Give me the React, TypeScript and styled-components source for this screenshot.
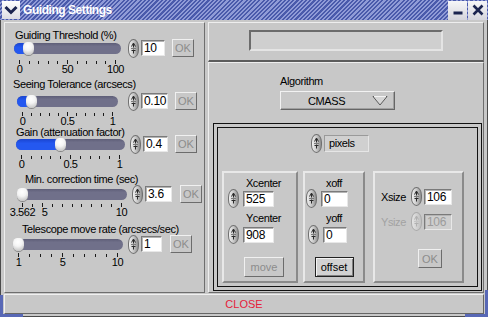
import React from "react";
import styled, { createGlobalStyle } from "styled-components";

const BG = "#c8c8c8";
const LIGHT = "#eeeeee";
const DARK = "#6e6e6e";

const GlobalStyle = createGlobalStyle`
  html, body { margin: 0; padding: 0; }
  body {
    background: ${BG};
    font-family: "Liberation Sans", Arial, Helvetica, sans-serif;
    font-size: 11px;
    letter-spacing: -0.4px;
    color: #000;
  }
  * { box-sizing: border-box; }
`;

const Window = styled.div`
  position: relative;
  width: 488px;
  height: 317px;
  background: ${BG};
  display: flex;
  flex-direction: column;
  overflow: hidden;
`;

const TitleBar = styled.div`
  height: 20px;
  flex: none;
  display: flex;
  align-items: center;
  padding: 0 1px 0 2px;
  background: repeating-linear-gradient(
    135deg,
    #4a5aab 0px,
    #4a5aab 1.5px,
    #909bd7 1.5px,
    #909bd7 3px
  );
`;

const MenuBox = styled.div`
  width: 18px;
  height: 18px;
  background: linear-gradient(#ffffff, #dcdce4);
  display: flex;
  align-items: center;
  justify-content: center;
`;

const TitleText = styled.div`
  margin-left: 3px;
  flex: 1;
  color: #fff;
  font-weight: bold;
  font-size: 12px;
  letter-spacing: -0.45px;
`;

const WinButton = styled.div`
  width: 19px;
  height: 19px;
  margin-left: 1px;
  background: linear-gradient(#f6f6f8, #d4d4dc);
  display: flex;
  align-items: center;
  justify-content: center;
`;

const Frame = styled.div`
  flex: 1;
  display: flex;
  flex-direction: column;
  gap: 1px;
  padding: 2px 3px;
  border: 1px solid #4a4a4a;
  border-top: none;
`;

const Main = styled.div`
  height: 271px;
  flex: none;
  display: flex;
  gap: 3px;
`;

const Raised = styled.div`
  background: ${BG};
  border: 1px solid;
  border-color: ${LIGHT} ${DARK} ${DARK} ${LIGHT};
`;

const LeftPanel = styled(Raised)`
  width: 201px;
  display: flex;
  flex-direction: column;
`;

const SliderBlock = styled.div`
  display: flex;
  flex-direction: column;
`;

const SliderLabel = styled.div<{ $ml: number; $mt: number }>`
  height: 12px;
  line-height: 12px;
  white-space: nowrap;
  margin-left: ${(p) => p.$ml}px;
  margin-top: ${(p) => p.$mt}px;
`;

const Controls = styled.div<{ $mt: number }>`
  height: 18px;
  display: flex;
  align-items: center;
  margin-top: ${(p) => p.$mt}px;
`;

const Track = styled.div<{ $ml: number; $w: number }>`
  position: relative;
  flex: none;
  margin-left: ${(p) => p.$ml}px;
  width: ${(p) => p.$w}px;
  height: 11px;
  border-radius: 6px;
  background: linear-gradient(#5e5e78, #70708a 30%, #70708a);
`;

const Fill = styled.div`
  position: absolute;
  left: 0;
  top: 0;
  bottom: 0;
  border-radius: 6px 0 0 6px;
  background: linear-gradient(#1a44d0, #2458f0 40%, #2458f0);
`;

const Knob = styled.div`
  position: absolute;
  top: -1px;
  width: 11px;
  height: 13px;
  border-radius: 5px 5px 6px 6px;
  background: radial-gradient(circle at 45% 30%, #ffffff 0%, #f4f4f4 40%, #b4b4b4 100%);
  box-shadow: 0 1px 0 #8a8a8a;
`;

const SpinShell = styled.div<{ $ml?: number; $disabled?: boolean }>`
  flex: none;
  width: 11px;
  height: 19px;
  margin-left: ${(p) => p.$ml ?? 0}px;
  border-radius: 6px / 9px;
  border: 1px solid ${(p) => (p.$disabled ? "#aaaaaa" : "#707070")};
  background: ${(p) =>
    p.$disabled
      ? "linear-gradient(90deg, #e4e4e4, #c0c0c0)"
      : "linear-gradient(90deg, #f2f2f2 0%, #c4c4c4 55%, #8e8e8e 100%)"};
  display: flex;
  align-items: center;
  justify-content: center;
`;

const ValueBox = styled.div<{ $w: number; $ml?: number; $disabled?: boolean }>`
  flex: none;
  width: ${(p) => p.$w}px;
  height: 16px;
  margin-left: ${(p) => p.$ml ?? 2}px;
  background: ${(p) => (p.$disabled ? "#cecece" : "#ffffff")};
  border: 1px solid;
  border-color: #7a7a7a #e8e8e8 #e8e8e8 #7a7a7a;
  box-shadow: inset 1px 1px 0 #b4b4b4;
  font-size: 12px;
  letter-spacing: -0.3px;
  line-height: 14px;
  padding-left: 2px;
  color: ${(p) => (p.$disabled ? "#9c9c9c" : "#000")};
`;

const PushButton = styled.div<{ $w: number; $h: number; $ml?: number; $active?: boolean }>`
  flex: none;
  width: ${(p) => p.$w}px;
  height: ${(p) => p.$h}px;
  margin-left: ${(p) => p.$ml ?? 0}px;
  display: flex;
  align-items: center;
  justify-content: center;
  letter-spacing: 0;
  background: ${(p) => (p.$active ? "#d2d2d2" : BG)};
  border: 1px solid;
  border-color: ${(p) =>
    p.$active ? "#222 #222 #222 #222" : "#f0f0f0 #6c6c6c #6c6c6c #f0f0f0"};
  box-shadow: ${(p) => (p.$active ? "inset 1px 1px 0 #f4f4f4, inset -1px -1px 0 #808080" : "none")};
  color: ${(p) => (p.$active ? "#000" : "#8c8c8c")};
`;

const Scale = styled.div<{ $ml: number; $w: number; $mt: number }>`
  position: relative;
  height: 14px;
  margin-left: ${(p) => p.$ml}px;
  margin-top: ${(p) => p.$mt}px;
  width: ${(p) => p.$w}px;
`;

const TickSvg = styled.svg`
  display: block;
`;

const ScaleLabel = styled.span`
  position: absolute;
  top: 5px;
  line-height: 9px;
  transform: translateX(-50%);
  white-space: nowrap;
`;

const RightCol = styled.div`
  width: 276px;
  display: flex;
  flex-direction: column;
`;

const TopPanel = styled(Raised)`
  height: 40px;
  flex: none;
  border-bottom: 2px solid #5c5c5c;
  padding-top: 7px;
  display: flex;
  justify-content: center;
`;

const StatusField = styled.div`
  width: 194px;
  height: 21px;
  background: #cfcfcf;
  border: 2px solid;
  border-color: #6c6c6c #e4e4e4 #e4e4e4 #6c6c6c;
`;

const LowerPanel = styled(Raised)`
  flex: 1;
  display: flex;
  flex-direction: column;
`;

const AlgoLabel = styled.div`
  margin: 12px 0 0 71px;
  height: 13px;
  line-height: 13px;
`;

const Dropdown = styled.div`
  margin: 3px 0 0 71px;
  width: 115px;
  height: 19px;
  display: flex;
  align-items: center;
  padding: 0 6px 0 27px;
  background: ${BG};
  border: 1px solid;
  border-color: #f2f2f2 #666 #666 #f2f2f2;
  box-shadow: inset -1px -1px 0 #a0a0a0;
`;

const DropText = styled.span`
  flex: 1;
`;

const DoubleBox = styled.div`
  flex: 1;
  margin: 13px 1px 1px 4px;
  border: 1px solid #111;
  box-shadow: inset 0 0 0 3px ${BG}, inset 0 0 0 4px #111;
  padding: 5px;
  display: flex;
  flex-direction: column;
`;

const UnitRow = styled.div`
  margin: 5px 0 0 92px;
  display: flex;
  align-items: center;
`;

const UnitField = styled.div`
  width: 45px;
  height: 17px;
  margin-left: 2px;
  background: #d0d0d0;
  border: 1px solid;
  border-color: #9a9a9a #e6e6e6 #e6e6e6 #9a9a9a;
  line-height: 15px;
  padding-left: 4px;
`;

const BoxesRow = styled.div`
  margin-top: 18px;
  height: 112px;
  display: flex;
`;

const SubBox = styled.div<{ $w: number; $ml: number }>`
  width: ${(p) => p.$w}px;
  margin-left: ${(p) => p.$ml}px;
  border: 2px solid;
  border-color: #e8e8e8 #8a8a8a #8a8a8a #e8e8e8;
  display: flex;
  flex-direction: column;
`;

const BoxLabel = styled.div<{ $mt: number; $pl?: number }>`
  margin-top: ${(p) => p.$mt}px;
  padding-left: ${(p) => p.$pl ?? 0}px;
  height: 13px;
  line-height: 13px;
  text-align: center;
`;

const SpinRow = styled.div<{ $mt: number; $ml: number }>`
  margin-top: ${(p) => p.$mt}px;
  margin-left: ${(p) => p.$ml}px;
  display: flex;
  align-items: center;
`;

const SizeLabel = styled.div<{ $disabled?: boolean }>`
  width: 36px;
  padding-left: 6px;
  color: ${(p) => (p.$disabled ? "#a2a2a2" : "#000")};
`;

const CenterRow = styled.div<{ $mt: number }>`
  margin-top: ${(p) => p.$mt}px;
  display: flex;
  justify-content: center;
`;

const CloseBar = styled.div`
  height: 20px;
  flex: none;
  display: flex;
  align-items: center;
  justify-content: center;
  background: ${BG};
  border: 1px solid;
  border-color: #f0f0f0 #666 #666 #f0f0f0;
  color: #e6203a;
  letter-spacing: 0;
`;

const CornerMark = styled.div<{ $side: "left" | "right"; $h: number }>`
  position: absolute;
  bottom: 0;
  ${(p) => (p.$side === "left" ? "left: 0;" : "right: 0;")}
  width: 23px;
  height: ${(p) => p.$h}px;
  border-bottom: 3px solid #5868b6;
  ${(p) =>
    p.$side === "left" ? "border-left: 3px solid #5868b6;" : "border-right: 3px solid #5868b6;"}
  pointer-events: none;
`;

function Spinner({ ml, disabled }: { ml?: number; disabled?: boolean }) {
  const c = disabled ? "#b0b0b0" : "#2a2a2a";
  return (
    <SpinShell $ml={ml} $disabled={disabled}>
      <svg width="9" height="17" viewBox="0 0 9 17">
        <path d="M2.5 6.5 L4.5 3 L6.5 6.5" stroke={c} strokeWidth="1" fill="none" />
        <path d="M4.5 3.5 V7.5" stroke={c} strokeWidth="1" />
        <path d="M2 8.5 H7" stroke={disabled ? "#c4c4c4" : "#7a7a7a"} strokeWidth="1" />
        <path d="M4.5 9.5 V13.5" stroke={c} strokeWidth="1" />
        <path d="M2.5 10.5 H6.5" stroke={c} strokeWidth="1" />
      </svg>
    </SpinShell>
  );
}

type SliderDef = {
  label: string;
  labelX: number;
  labelMt: number;
  ctrlMt: number;
  scaleMt: number;
  trackX: number;
  trackW: number;
  spinX: number;
  inputW: number;
  okX: number;
  value: string;
  v: number;
  min: number;
  max: number;
  ticks: number;
  labels: { t: string; v: number }[];
};

const X0 = 5;

const sliders: SliderDef[] = [
  {
    label: "Guiding Threshold (%)",
    labelX: 15, labelMt: 6, ctrlMt: -2, scaleMt: 3,
    trackX: 14, trackW: 107, spinX: 128, inputW: 24, okX: 172,
    value: "10", v: 10, min: 0, max: 100, ticks: 11,
    labels: [{ t: "0", v: 0 }, { t: "50", v: 50 }, { t: "100", v: 100 }],
  },
  {
    label: "Seeing Tolerance (arcsecs)",
    labelX: 13, labelMt: 4, ctrlMt: 2, scaleMt: 2,
    trackX: 17, trackW: 101, spinX: 128, inputW: 27, okX: 175,
    value: "0.10", v: 0.1, min: 0, max: 1, ticks: 11,
    labels: [{ t: "0", v: 0 }, { t: "0.5", v: 0.5 }, { t: "1", v: 1 }],
  },
  {
    label: "Gain (attenuation factor)",
    labelX: 16, labelMt: 0, ctrlMt: -3, scaleMt: 2,
    trackX: 16, trackW: 109, spinX: 130, inputW: 25, okX: 175,
    value: "0.4", v: 0.4, min: 0, max: 1, ticks: 11,
    labels: [{ t: "0", v: 0 }, { t: "0.5", v: 0.5 }, { t: "1", v: 1 }],
  },
  {
    label: "Min. correction time (sec)",
    labelX: 25, labelMt: 4, ctrlMt: 0, scaleMt: 0,
    trackX: 17, trackW: 110, spinX: 132, inputW: 27, okX: 180,
    value: "3.6", v: 3.6, min: 3.562, max: 10, ticks: 11,
    labels: [{ t: "3.562", v: 3.562 }, { t: "5", v: 5 }, { t: "10", v: 10 }],
  },
  {
    label: "Telescope move rate (arcsecs/sec)",
    labelX: 22, labelMt: 6, ctrlMt: 0, scaleMt: 0,
    trackX: 13, trackW: 110, spinX: 128, inputW: 21, okX: 170,
    value: "1", v: 1, min: 1, max: 10, ticks: 10,
    labels: [{ t: "1", v: 1 }, { t: "5", v: 5 }, { t: "10", v: 10 }],
  },
];

function Ticks({ width, count, majors }: { width: number; count: number; majors: number[] }) {
  const lines = [];
  for (let i = 0; i < count; i++) {
    const x = Math.round((i * (width - 1)) / (count - 1)) + 0.5;
    const major = majors.includes(i);
    lines.push(
      <line key={i} x1={x} x2={x} y1={major ? 0 : 1} y2={4} stroke="#1a1a1a" strokeWidth="1" />
    );
  }
  return (
    <TickSvg width={width} height={4}>
      {lines}
    </TickSvg>
  );
}

function SliderRow({ d }: { d: SliderDef }) {
  const frac = (d.v - d.min) / (d.max - d.min);
  const center = 5 + frac * (d.trackW - 10);
  const scaleW = d.trackW - 10;
  const majors = d.labels.map((l) => Math.round(((l.v - d.min) / (d.max - d.min)) * (d.ticks - 1)));
  return (
    <SliderBlock>
      <SliderLabel $ml={d.labelX - X0} $mt={d.labelMt}>
        {d.label}
      </SliderLabel>
      <Controls $mt={d.ctrlMt}>
        <Track $ml={d.trackX - X0} $w={d.trackW}>
          {frac > 0.03 && <Fill style={{ width: `${center}px` }} />}
          <Knob style={{ left: `${center - 5.5}px` }} />
        </Track>
        <Spinner ml={d.spinX - (d.trackX + d.trackW)} />
        <ValueBox $w={d.inputW}>{d.value}</ValueBox>
        <PushButton $w={22} $h={18} $ml={d.okX - (d.spinX + 13 + d.inputW)}>
          OK
        </PushButton>
      </Controls>
      <Scale $ml={d.trackX + 5 - X0} $w={scaleW} $mt={d.scaleMt}>
        <Ticks width={scaleW} count={d.ticks} majors={majors} />
        {d.labels.map((l) => (
          <ScaleLabel key={l.t} style={{ left: `${((l.v - d.min) / (d.max - d.min)) * (scaleW - 1) + 0.5}px` }}>
            {l.t}
          </ScaleLabel>
        ))}
      </Scale>
    </SliderBlock>
  );
}

export default function App() {
  return (
    <>
      <GlobalStyle />
      <Window>
        <TitleBar>
          <MenuBox>
            <svg width="14" height="10" viewBox="0 0 14 10">
              <path d="M1.5 2 L7 7.5 L12.5 2" stroke="#1b2450" strokeWidth="3" fill="none" />
            </svg>
          </MenuBox>
          <TitleText>Guiding Settings</TitleText>
          <WinButton>
            <svg width="12" height="12" viewBox="0 0 12 12">
              <rect x="1.5" y="7.5" width="9" height="3" fill="#1b2450" />
            </svg>
          </WinButton>
          <WinButton>
            <svg width="12" height="12" viewBox="0 0 12 12">
              <path d="M1.5 1.5 L10.5 10.5 M10.5 1.5 L1.5 10.5" stroke="#1b2450" strokeWidth="2.6" />
            </svg>
          </WinButton>
        </TitleBar>
        <Frame>
          <Main>
            <LeftPanel>
              {sliders.map((d) => (
                <SliderRow key={d.label} d={d} />
              ))}
            </LeftPanel>
            <RightCol>
              <TopPanel>
                <StatusField />
              </TopPanel>
              <LowerPanel>
                <AlgoLabel>Algorithm</AlgoLabel>
                <Dropdown>
                  <DropText>CMASS</DropText>
                  <svg width="16" height="11" viewBox="0 0 16 11">
                    <path d="M1 1.5 H15 L8 10 Z" fill="#d6d6d6" stroke="#5a5a5a" strokeWidth="1" />
                    <path d="M2 1.5 H14" stroke="#f4f4f4" strokeWidth="1" />
                  </svg>
                </Dropdown>
                <DoubleBox>
                  <UnitRow>
                    <Spinner />
                    <UnitField>pixels</UnitField>
                  </UnitRow>
                  <BoxesRow>
                    <SubBox $w={76} $ml={3}>
                      <BoxLabel $mt={4} $pl={7}>
                        Xcenter
                      </BoxLabel>
                      <SpinRow $mt={-1} $ml={4}>
                        <Spinner />
                        <ValueBox $w={31} $ml={4}>525</ValueBox>
                      </SpinRow>
                      <BoxLabel $mt={4} $pl={7}>
                        Ycenter
                      </BoxLabel>
                      <SpinRow $mt={0} $ml={4}>
                        <Spinner />
                        <ValueBox $w={31} $ml={4}>908</ValueBox>
                      </SpinRow>
                      <SpinRow $mt={13} $ml={20}>
                        <PushButton $w={40} $h={20}>
                          move
                        </PushButton>
                      </SpinRow>
                    </SubBox>
                    <SubBox $w={62} $ml={5}>
                      <BoxLabel $mt={4}>xoff</BoxLabel>
                      <SpinRow $mt={-1} $ml={1}>
                        <Spinner />
                        <ValueBox $w={27} $ml={4}>0</ValueBox>
                      </SpinRow>
                      <BoxLabel $mt={4}>yoff</BoxLabel>
                      <SpinRow $mt={0} $ml={3}>
                        <Spinner />
                        <ValueBox $w={24} $ml={4}>0</ValueBox>
                      </SpinRow>
                      <CenterRow $mt={13}>
                        <PushButton $w={39} $h={20} $active>
                          offset
                        </PushButton>
                      </CenterRow>
                    </SubBox>
                    <SubBox $w={91} $ml={8}>
                      <SpinRow $mt={14} $ml={0}>
                        <SizeLabel>Xsize</SizeLabel>
                        <Spinner />
                        <ValueBox $w={28}>106</ValueBox>
                      </SpinRow>
                      <SpinRow $mt={6} $ml={0}>
                        <SizeLabel $disabled>Ysize</SizeLabel>
                        <Spinner disabled />
                        <ValueBox $w={28} $disabled>
                          106
                        </ValueBox>
                      </SpinRow>
                      <SpinRow $mt={18} $ml={43}>
                        <PushButton $w={24} $h={19}>
                          OK
                        </PushButton>
                      </SpinRow>
                    </SubBox>
                  </BoxesRow>
                </DoubleBox>
              </LowerPanel>
            </RightCol>
          </Main>
          <CloseBar>CLOSE</CloseBar>
        </Frame>
        <CornerMark $side="left" $h={22} />
        <CornerMark $side="right" $h={27} />
      </Window>
    </>
  );
}
